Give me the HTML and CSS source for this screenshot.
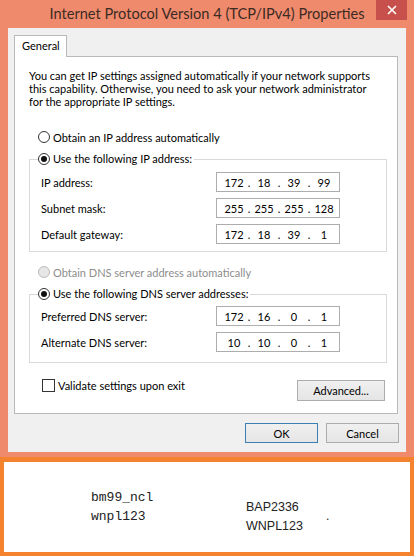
FILE: index.html
```html
<!DOCTYPE html>
<html>
<head>
<meta charset="utf-8">
<link rel="stylesheet" href="styles.css">
</head>
<body>
<div class="window">
  <div class="titlebar">
    <div class="title">Internet Protocol Version 4 (TCP/IPv4) Properties</div>
    <div class="close"><svg width="10" height="10" viewBox="0 0 10 10"><path d="M1 1L9 9M9 1L1 9" stroke="#fff" stroke-width="1.6"/></svg></div>
  </div>
  <div class="client">
    <div class="tabs"><div class="tab">General</div></div>
    <div class="panel">
      <p class="intro">You can get IP settings assigned automatically if your network supports<br>this capability. Otherwise, you need to ask your network administrator<br>for the appropriate IP settings.</p>
      <div class="radio-row"><span class="radio"></span>Obtain an IP address automatically</div>
      <fieldset class="group ip-group">
        <legend><span class="radio on"></span>Use the following IP address:</legend>
        <div class="field"><span>IP address:</span><div class="ip"><span class="seg">172</span><span class="sep">.</span><span class="seg">18</span><span class="sep">.</span><span class="seg">39</span><span class="sep">.</span><span class="seg">99</span></div></div>
        <div class="field"><span>Subnet mask:</span><div class="ip"><span class="seg">255</span><span class="sep">.</span><span class="seg">255</span><span class="sep">.</span><span class="seg">255</span><span class="sep">.</span><span class="seg">128</span></div></div>
        <div class="field"><span>Default gateway:</span><div class="ip"><span class="seg">172</span><span class="sep">.</span><span class="seg">18</span><span class="sep">.</span><span class="seg">39</span><span class="sep">.</span><span class="seg">1</span></div></div>
      </fieldset>
      <div class="radio-row disabled dns-auto"><span class="radio"></span>Obtain DNS server address automatically</div>
      <fieldset class="group dns-group">
        <legend><span class="radio on"></span>Use the following DNS server addresses:</legend>
        <div class="field"><span>Preferred DNS server:</span><div class="ip"><span class="seg">172</span><span class="sep">.</span><span class="seg">16</span><span class="sep">.</span><span class="seg">0</span><span class="sep">.</span><span class="seg">1</span></div></div>
        <div class="field"><span>Alternate DNS server:</span><div class="ip"><span class="seg">10</span><span class="sep">.</span><span class="seg">10</span><span class="sep">.</span><span class="seg">0</span><span class="sep">.</span><span class="seg">1</span></div></div>
      </fieldset>
      <div class="bottom-row">
        <div class="check-row"><span class="checkbox"></span>Validate settings upon exit</div>
        <button class="btn advanced">Advanced...</button>
      </div>
    </div>
    <div class="actions">
      <button class="btn default">OK</button>
      <button class="btn">Cancel</button>
    </div>
  </div>
</div>
<div class="note">
  <div class="mono"><div>bm99_ncl</div><div>wnpl123</div></div>
  <div class="caps"><div>BAP2336</div><div>WNPL123</div></div>
  <div class="dot">.</div>
</div>
</body>
</html>
```

FILE: styles.css
```css
* { box-sizing: border-box; }
html, body { margin: 0; }
body {
  width: 414px;
  height: 556px;
  overflow: hidden;
  background: #ef8a6c;
  font-family: Lato, "Liberation Sans", sans-serif;
  font-size: 11px;
  color: #000;
}
.window {
  height: 457px;
  padding: 0 8px 5px;
  display: flex;
  flex-direction: column;
}
.titlebar {
  height: 28px;
  margin: 0 -8px;
  display: grid;
  grid-template-columns: 1fr auto 1fr;
}
.title {
  grid-column: 2;
  font-size: 14.6px;
  line-height: 28px;
  color: #3d2a24;
  white-space: nowrap;
}
.close {
  grid-column: 3;
  justify-self: end;
  width: 31px;
  height: 20px;
  margin-right: 7px;
  background: #c7504c;
  display: flex;
  align-items: center;
  justify-content: center;
}
.client {
  flex: 1;
  background: #f0f0f0;
  padding: 7px 8px 0 6px;
  display: flex;
  flex-direction: column;
}
.tabs { display: flex; }
.tab {
  position: relative;
  z-index: 1;
  width: 53px;
  height: 22px;
  margin-bottom: -1px;
  padding-left: 7px;
  line-height: 20px;
  background: #fff;
  border: 1px solid #b9b9b9;
  border-bottom: none;
}
.panel {
  height: 358px;
  background: #fff;
  border: 1px solid #b9b9b9;
  padding: 12px 11px 0 14px;
}
.intro {
  margin: 0;
  line-height: 13px;
}
.radio-row {
  margin-top: 22px;
  padding-left: 9px;
  height: 14px;
  display: flex;
  align-items: center;
}
.radio {
  width: 12px;
  height: 12px;
  margin-right: 3px;
  border: 1px solid #333;
  border-radius: 50%;
  background: #fff;
  display: inline-flex;
  align-items: center;
  justify-content: center;
  flex: none;
}
.radio.on::after {
  content: "";
  width: 6px;
  height: 6px;
  border-radius: 50%;
  background: #111;
}
.disabled { color: #8d8d8d; }
.disabled .radio { border-color: #bcbcbc; background: #e6e6e6; }
.dns-auto { margin-top: 13px; }
.group {
  margin: 8px 0 0;
  width: 358px;
  border: 1px solid #d9d9d9;
  padding: 6px 0 7px 8px;
  min-width: 0;
}
.dns-group { padding-top: 5px; padding-bottom: 10px; }
.group legend {
  padding: 0 2px 0 0;
  height: 14px;
  line-height: 14px;
  display: flex;
  align-items: center;
}
.field {
  display: grid;
  grid-template-columns: 175px 124px;
  align-items: center;
  height: 20px;
  padding-left: 3px;
}
.field + .field { margin-top: 6px; }
.ip {
  height: 20px;
  border: 1px solid #adadad;
  display: flex;
  align-items: center;
  padding-left: 5.5px;
}
.seg { width: 23px; text-align: center; }
.sep { width: 7px; text-align: center; }
.bottom-row {
  margin-top: 16px;
  display: flex;
  justify-content: space-between;
  align-items: flex-start;
}
.check-row {
  padding-left: 13px;
  height: 13px;
  display: flex;
  align-items: center;
}
.checkbox {
  width: 13px;
  height: 13px;
  margin-right: 3px;
  border: 1px solid #333;
  background: #fff;
}
.btn {
  font: inherit;
  color: #000;
  height: 21px;
  padding: 0;
  border: 1px solid #acacac;
  background: linear-gradient(#f0f0f0, #e5e5e5);
}
.advanced {
  width: 88px;
  margin-top: 1px;
  margin-right: 1px;
}
.actions {
  margin-top: 9px;
  margin-right: -1px;
  display: flex;
  justify-content: flex-end;
  gap: 8px;
}
.actions .btn { width: 73px; height: 20px; }
.btn.default { border-color: #3c7fb1; }
.note {
  height: 99px;
  background: #fff;
  border: 4px solid #f5822f;
  border-top-width: 5px;
  padding: 26px 0 0 87px;
  display: flex;
  line-height: 19px;
  color: #222;
}
.mono {
  width: 155px;
  font-family: "Liberation Mono", monospace;
  font-size: 13px;
}
.caps {
  width: 80px;
  margin-top: 10px;
  font-family: "Liberation Sans", sans-serif;
  font-size: 12.5px;
}
.dot {
  margin-top: 19px;
  font-family: "Liberation Sans", sans-serif;
  font-size: 12px;
}
```
